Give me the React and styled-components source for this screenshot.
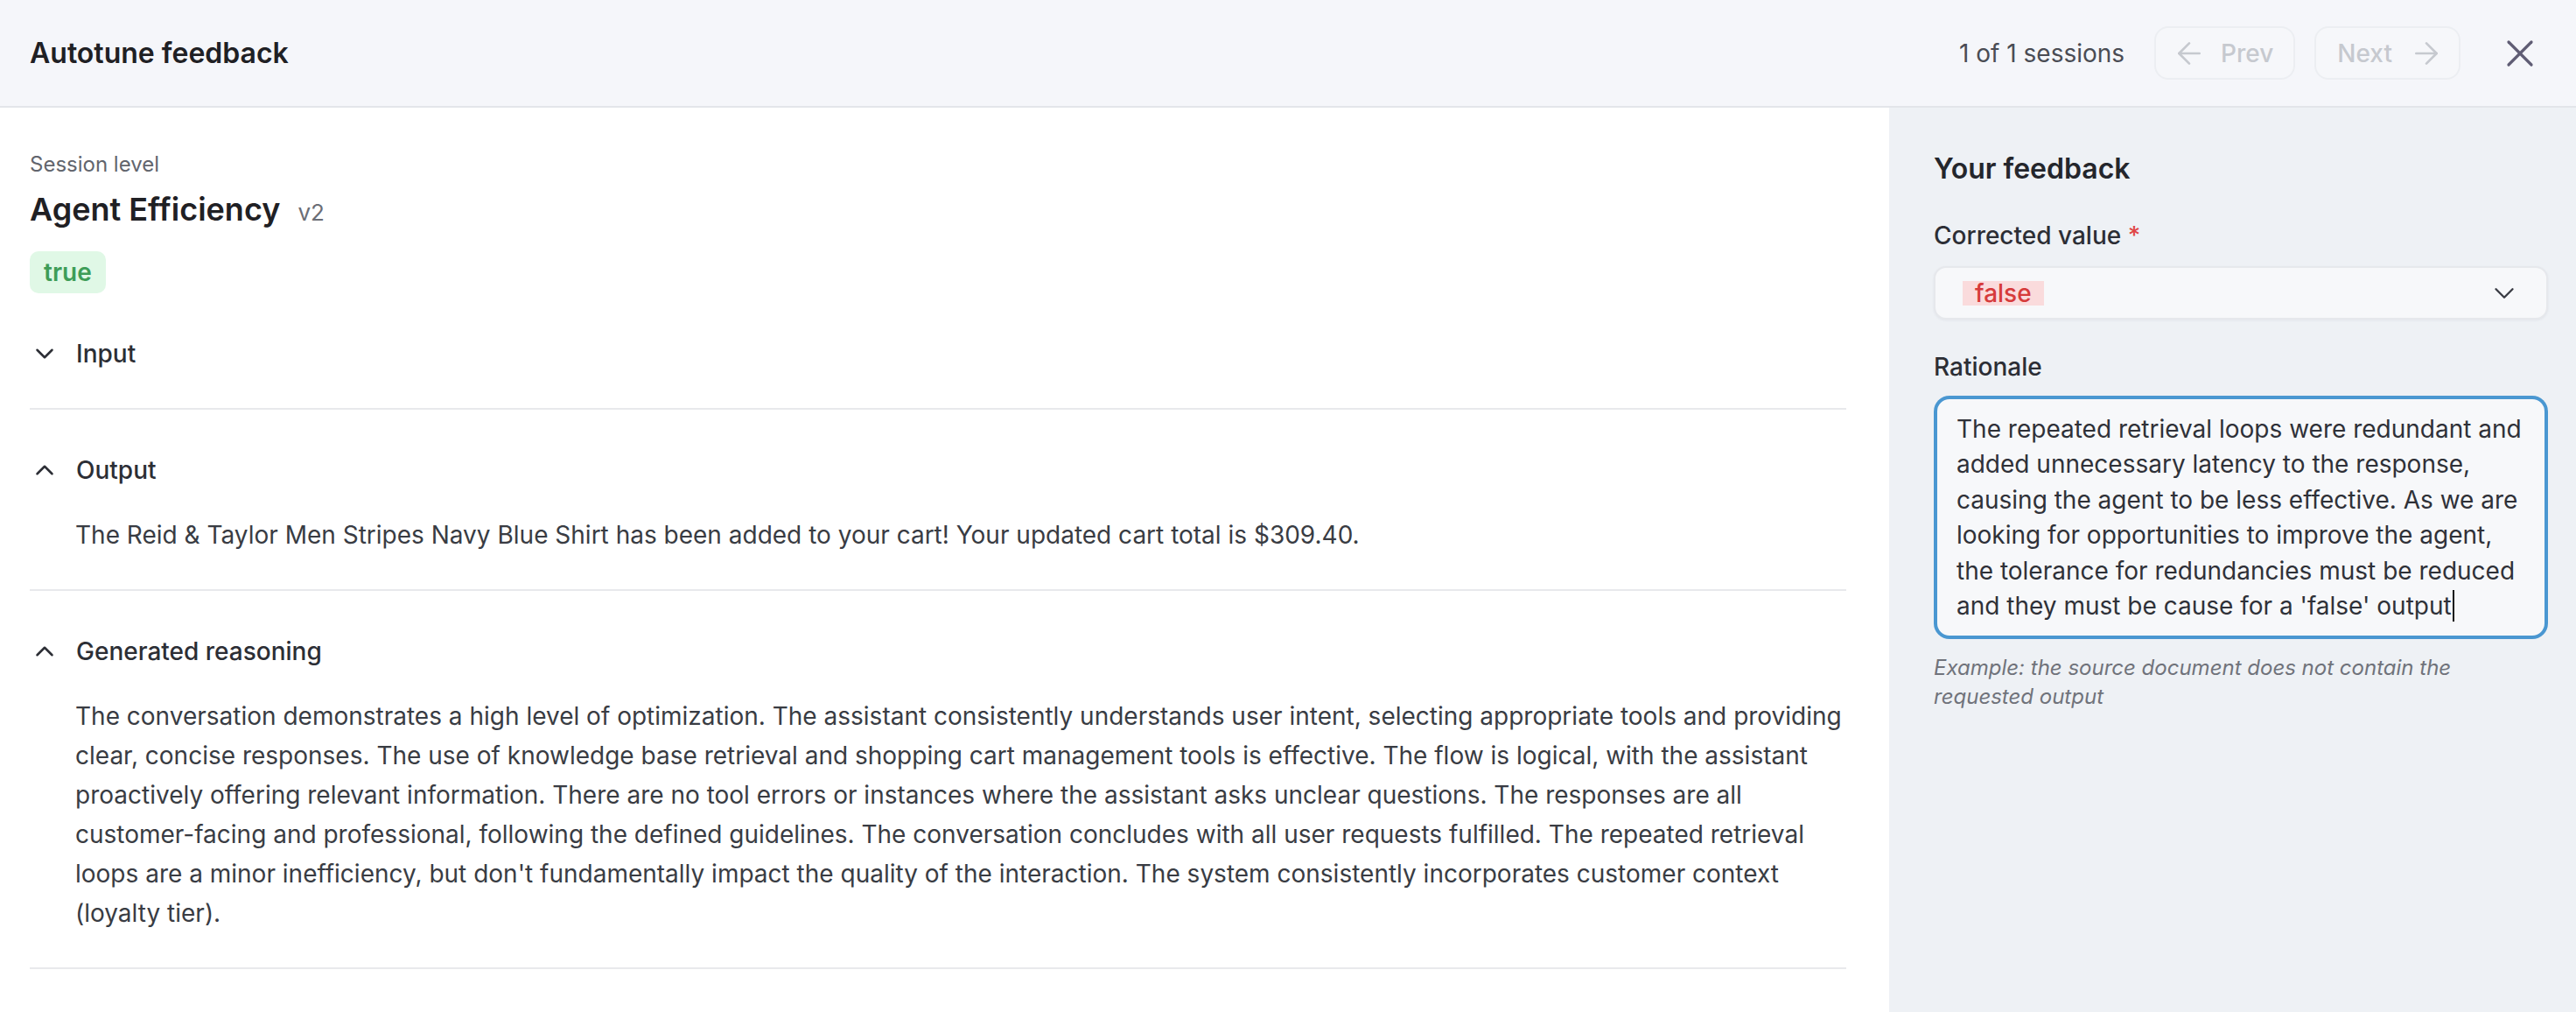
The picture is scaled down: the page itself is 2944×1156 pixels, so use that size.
import React from "react";
import styled, { createGlobalStyle } from "styled-components";
import { ChevronDown, ChevronUp, ArrowLeft, ArrowRight, X } from "lucide-react";

const GlobalStyle = createGlobalStyle`
  html, body {
    margin: 0;
    padding: 0;
    background: #ffffff;
  }
  * {
    box-sizing: border-box;
  }
`;

const sections = [
  { title: "Input", open: false },
  {
    title: "Output",
    open: true,
    body: "The Reid & Taylor Men Stripes Navy Blue Shirt has been added to your cart! Your updated cart total is $309.40.",
  },
  {
    title: "Generated reasoning",
    open: true,
    body: "The conversation demonstrates a high level of optimization. The assistant consistently understands user intent, selecting appropriate tools and providing clear, concise responses. The use of knowledge base retrieval and shopping cart management tools is effective. The flow is logical, with the assistant proactively offering relevant information. There are no tool errors or instances where the assistant asks unclear questions. The responses are all customer-facing and professional, following the defined guidelines. The conversation concludes with all user requests fulfilled. The repeated retrieval loops are a minor inefficiency, but don't fundamentally impact the quality of the interaction. The system consistently incorporates customer context (loyalty tier).",
  },
];

const rationale =
  "The repeated retrieval loops were redundant and added unnecessary latency to the response, causing the agent to be less effective. As we are looking for opportunities to improve the agent, the tolerance for redundancies must be reduced and they must be cause for a 'false' output";

export default function App() {
  return (
    <Page>
      <GlobalStyle />
      <Header>
        <Title>Autotune feedback</Title>
        <Pager>
          <Count>1 of 1 sessions</Count>
          <NavButton disabled>
            <ArrowLeft size={40} strokeWidth={1.6} />
            Prev
          </NavButton>
          <NavButton disabled $next>
            Next
            <ArrowRight size={40} strokeWidth={1.6} />
          </NavButton>
          <CloseButton aria-label="Close">
            <X size={52} strokeWidth={1.5} />
          </CloseButton>
        </Pager>
      </Header>

      <Main>
        <Content>
          <Eyebrow>Session level</Eyebrow>
          <MetricRow>
            <MetricName>Agent Efficiency</MetricName>
            <Version>v2</Version>
          </MetricRow>
          <Badge>true</Badge>

          {sections.map((s) => (
            <Section key={s.title}>
              <SectionHead>
                {s.open ? (
                  <ChevronUp size={34} strokeWidth={1.8} />
                ) : (
                  <ChevronDown size={34} strokeWidth={1.8} />
                )}
                {s.title}
              </SectionHead>
              {s.open && <SectionBody>{s.body}</SectionBody>}
            </Section>
          ))}
        </Content>

        <Sidebar>
          <SideTitle>Your feedback</SideTitle>
          <Field>
            <Label>
              Corrected value <Required>*</Required>
            </Label>
            <Select>
              <FalseTag>false</FalseTag>
              <ChevronDown size={38} strokeWidth={1.5} />
            </Select>
          </Field>
          <Field>
            <Label>Rationale</Label>
            <TextBox>
              {rationale}
              <Caret />
            </TextBox>
            <Hint>
              Example: the source document does not contain the requested output
            </Hint>
          </Field>
        </Sidebar>
      </Main>
    </Page>
  );
}

const Page = styled.div`
  height: 100vh;
  display: flex;
  flex-direction: column;
  font-family: Inter, "Noto Sans", sans-serif;
  color: #1f2024;
`;

const Header = styled.header`
  height: 123px;
  flex-shrink: 0;
  display: flex;
  align-items: center;
  justify-content: space-between;
  padding: 0 38px 0 34px;
  background: #f5f6fa;
  border-bottom: 2px solid #e3e5ea;
`;

const Title = styled.h1`
  margin: 0;
  font-size: 32px;
  font-weight: 600;
  color: #1f2024;
`;

const Pager = styled.div`
  display: flex;
  align-items: center;
`;

const Count = styled.span`
  font-size: 28px;
  color: #4a4c54;
  margin-right: 34px;
`;

const NavButton = styled.button`
  height: 61px;
  display: flex;
  align-items: center;
  gap: ${(p) => (p.$next ? "19px" : "16px")};
  padding: ${(p) => (p.$next ? "0 17px 0 24px" : "0 23px 0 18px")};
  margin-right: ${(p) => (p.$next ? "42px" : "22px")};
  font-family: inherit;
  font-size: 28px;
  font-weight: 500;
  color: #c6c9cf;
  background: #f6f7fa;
  border: 2px solid #eceef2;
  border-radius: 16px;
`;

const CloseButton = styled.button`
  display: flex;
  padding: 0;
  border: none;
  background: none;
  color: #5f5c74;
`;

const Main = styled.main`
  flex: 1;
  display: flex;
  min-height: 0;
`;

const Content = styled.div`
  flex: 1;
  padding: 50px 49px 0 34px;
  background: #ffffff;
`;

const Eyebrow = styled.div`
  font-size: 24px;
  line-height: 30px;
  color: #62656d;
`;

const MetricRow = styled.div`
  display: flex;
  align-items: baseline;
  gap: 20px;
  margin-top: 11px;
  height: 50px;
`;

const MetricName = styled.h2`
  margin: 0;
  font-size: 36px;
  line-height: 50px;
  font-weight: 600;
  color: #1f2024;
`;

const Version = styled.span`
  font-size: 26px;
  color: #6b6e76;
`;

const Badge = styled.span`
  display: inline-flex;
  align-items: center;
  height: 48px;
  margin-top: 23px;
  padding: 0 16px;
  border-radius: 10px;
  background: #e0f8e6;
  color: #3e9d58;
  font-size: 28px;
  font-weight: 600;
`;

const Section = styled.section`
  padding: 39px 0 32px;
  border-bottom: 2px solid #e8e9ec;
`;

const SectionHead = styled.div`
  height: 60px;
  display: flex;
  align-items: center;
  gap: 19px;
  font-size: 28px;
  font-weight: 500;
  color: #2c2e35;

  svg {
    color: #2c2e35;
    flex-shrink: 0;
  }
`;

const SectionBody = styled.p`
  margin: 22px 0 0;
  padding: 0 0 7px 52px;
  font-size: 28px;
  line-height: 45px;
  color: #393c43;
`;

const Sidebar = styled.aside`
  width: 785px;
  flex-shrink: 0;
  padding: 50px 32px 0 51px;
  background: #eef1f5;
`;

const SideTitle = styled.h3`
  margin: 0 0 38px;
  font-size: 32px;
  line-height: 40px;
  font-weight: 600;
  color: #24262c;
`;

const Field = styled.div`
  display: flex;
  flex-direction: column;
  margin-bottom: 36px;
`;

const Label = styled.label`
  font-size: 28px;
  line-height: 36px;
  font-weight: 500;
  color: #2c2e35;
  margin-bottom: 17px;
`;

const Required = styled.span`
  color: #e04646;
`;

const Select = styled.div`
  height: 61px;
  display: flex;
  align-items: center;
  justify-content: space-between;
  padding: 0 29px 0 31px;
  background: #f7f8fa;
  border: 2px solid #e6e8ec;
  border-radius: 14px;
  box-shadow: 0 1px 3px rgba(30, 40, 60, 0.06);

  svg {
    color: #3a3c44;
  }
`;

const FalseTag = styled.span`
  height: 28px;
  line-height: 28px;
  padding: 0 14px;
  background: #fadbdc;
  color: #d63b3b;
  font-size: 28px;
  font-weight: 500;
`;

const TextBox = styled.div`
  height: 274px;
  padding: 14px 22px;
  margin: 0 2px;
  background: #f7f8fa;
  border: 2px solid #4a97d1;
  border-radius: 16px;
  box-shadow: 0 0 0 2px #4a97d1;
  font-size: 28px;
  line-height: 40.4px;
  color: #2f3138;
`;

const Caret = styled.span`
  display: inline-block;
  width: 2px;
  height: 36px;
  margin-left: 1px;
  vertical-align: -8px;
  background: #111;
`;

const Hint = styled.p`
  margin: 18px 0 0;
  font-size: 24px;
  line-height: 33px;
  font-style: italic;
  color: #70737b;
`;
